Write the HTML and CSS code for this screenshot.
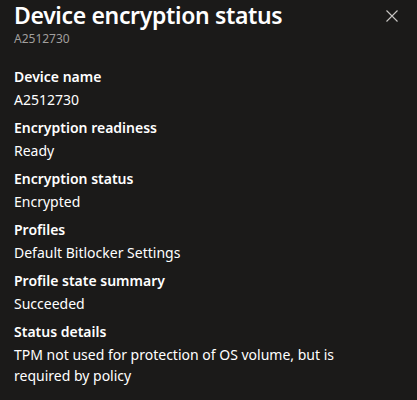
FILE: index.html
```html
<!DOCTYPE html>
<html>
<head>
<meta charset="utf-8">
<link rel="stylesheet" href="styles.css">
</head>
<body>
<div class="panel">
  <header class="head">
    <div class="titles">
      <h1 class="title">Device encryption status</h1>
      <div class="subtitle">A2512730</div>
    </div>
    <button class="close" aria-label="Close">
      <svg width="12" height="12" viewBox="0 0 12 12"><path d="M0.5 0.5 L11.5 11.5 M11.5 0.5 L0.5 11.5" stroke="#c8c6c4" stroke-width="1.1" fill="none"/></svg>
    </button>
  </header>
  <dl class="fields">
    <div class="field"><dt>Device name</dt><dd>A2512730</dd></div>
    <div class="field"><dt>Encryption readiness</dt><dd>Ready</dd></div>
    <div class="field"><dt>Encryption status</dt><dd>Encrypted</dd></div>
    <div class="field"><dt>Profiles</dt><dd>Default Bitlocker Settings</dd></div>
    <div class="field"><dt>Profile state summary</dt><dd>Succeeded</dd></div>
    <div class="field"><dt>Status details</dt><dd>TPM not used for protection of OS volume, but is required by policy</dd></div>
  </dl>
</div>
</body>
</html>
```
FILE: styles.css
```css
html, body {
  margin: 0;
  padding: 0;
  background: #1b1a19;
}
body {
  font-family: "Noto Sans", "Open Sans", sans-serif;
  color: #ffffff;
  width: 417px;
  height: 400px;
  overflow: hidden;
}
.panel {
  padding: 0 13px 0 14px;
}
.head {
  display: flex;
  justify-content: space-between;
  align-items: flex-start;
}
.title {
  margin: 0;
  font-size: 23px;
  font-weight: 600;
  line-height: 30px;
  letter-spacing: -0.35px;
}
.subtitle {
  font-size: 12px;
  line-height: 16px;
  color: #a19f9d;
  margin-top: 1px;
}
.close {
  background: none;
  border: none;
  padding: 0;
  margin: 10px 6px 0 0;
  width: 12px;
  height: 12px;
  display: flex;
}
.fields {
  margin: 20px 0 0 0;
  padding: 0;
}
.field {
  margin-bottom: 8px;
}
.field dt {
  font-size: 14px;
  font-weight: 600;
  line-height: 20px;
  margin-bottom: 2px;
}
.field dd {
  margin: 0;
  font-size: 14px;
  line-height: 21px;
  max-width: 360px;
}
```
